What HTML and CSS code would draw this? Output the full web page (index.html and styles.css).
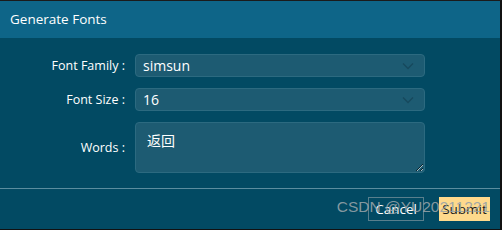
FILE: index.html
```html
<!DOCTYPE html>
<html lang="en">

<head>
  <meta charset="UTF-8">
  <title>Generate Fonts</title>
  <link rel="stylesheet" href="styles.css">
</head>

<body>
  <div class="dialog">
    <header class="dialog-head">Generate Fonts</header>

    <form class="dialog-body">
      <label class="field-label">Font Family :</label>
      <div class="select">
        <span>simsun</span>
        <svg class="chevron" width="12" height="8" viewBox="0 0 12 8"><path d="M1 1.5 L6 6.5 L11 1.5" fill="none" stroke="#17495d" stroke-width="1.3"/></svg>
      </div>

      <label class="field-label">Font Size :</label>
      <div class="select">
        <span>16</span>
        <svg class="chevron" width="12" height="8" viewBox="0 0 12 8"><path d="M1 1.5 L6 6.5 L11 1.5" fill="none" stroke="#17495d" stroke-width="1.3"/></svg>
      </div>

      <label class="field-label">Words :</label>
      <textarea class="words">返回</textarea>
    </form>

    <footer class="dialog-foot">
      <button class="btn btn-cancel" type="button">Cancel</button>
      <button class="btn btn-submit" type="button">Submit</button>
      <span class="watermark">CSDN @YU20211221</span>
    </footer>
  </div>
</body>

</html>
```

FILE: styles.css
```css
body {
  margin: 0;
  background: #fff;
  font-family: "Open Sans", "Noto Sans", sans-serif;
}

.dialog {
  width: 500px;
  height: 228px;
  border-top: 1px solid #1b1b1b;
  border-right: 2px solid #111;
  border-bottom: 1px solid #111;
  background: #024a63;
  display: flex;
  flex-direction: column;
}

.dialog-head {
  height: 37px;
  background: #0e6588;
  color: #fff;
  font-size: 13.5px;
  line-height: 37px;
  padding-left: 10px;
}

.dialog-body {
  display: grid;
  grid-template-columns: 125px 290px;
  column-gap: 10px;
  row-gap: 11px;
  padding: 16px 0 15px;
  border-bottom: 1px solid #5b8d9f;
}

.field-label {
  color: #fff;
  font-size: 12.5px;
  text-align: right;
  align-self: center;
}

.select {
  height: 21px;
  border: 1px solid #2c6a80;
  border-radius: 4px;
  background: #1d5b72;
  color: #fff;
  font-size: 14px;
  display: flex;
  align-items: center;
  justify-content: space-between;
  padding: 0 10px 0 7px;
}

.words {
  box-sizing: content-box;
  margin: 0;
  padding: 6px 0 0 11px;
  height: 43px;
  width: 277px;
  border: 1px solid #2c6a80;
  border-radius: 4px;
  background: #1d5b72;
  color: #fff;
  font-family: "Noto Sans CJK SC", sans-serif;
  font-size: 14px;
  line-height: 22px;
  resize: both;
}

.dialog-foot {
  position: relative;
  display: flex;
  justify-content: flex-end;
  gap: 15px;
  padding: 8px 10px 0;
}

.btn {
  height: 24px;
  font-family: "Open Sans", sans-serif;
  font-size: 13.5px;
  padding: 0;
  border-radius: 0;
}

.btn-cancel {
  background: transparent;
  border: 1px solid #587f8d;
  color: #fff;
  width: 56px;
}

.btn-submit {
  background: #fed98c;
  border: 1px solid #fed98c;
  color: #1a1a1a;
  width: 51px;
}

.watermark {
  position: absolute;
  z-index: 1;
  right: 10px;
  top: 9px;
  font-family: "Liberation Sans", sans-serif;
  font-size: 15.5px;
  color: rgba(150, 162, 168, 0.9);
  pointer-events: none;
}
```
